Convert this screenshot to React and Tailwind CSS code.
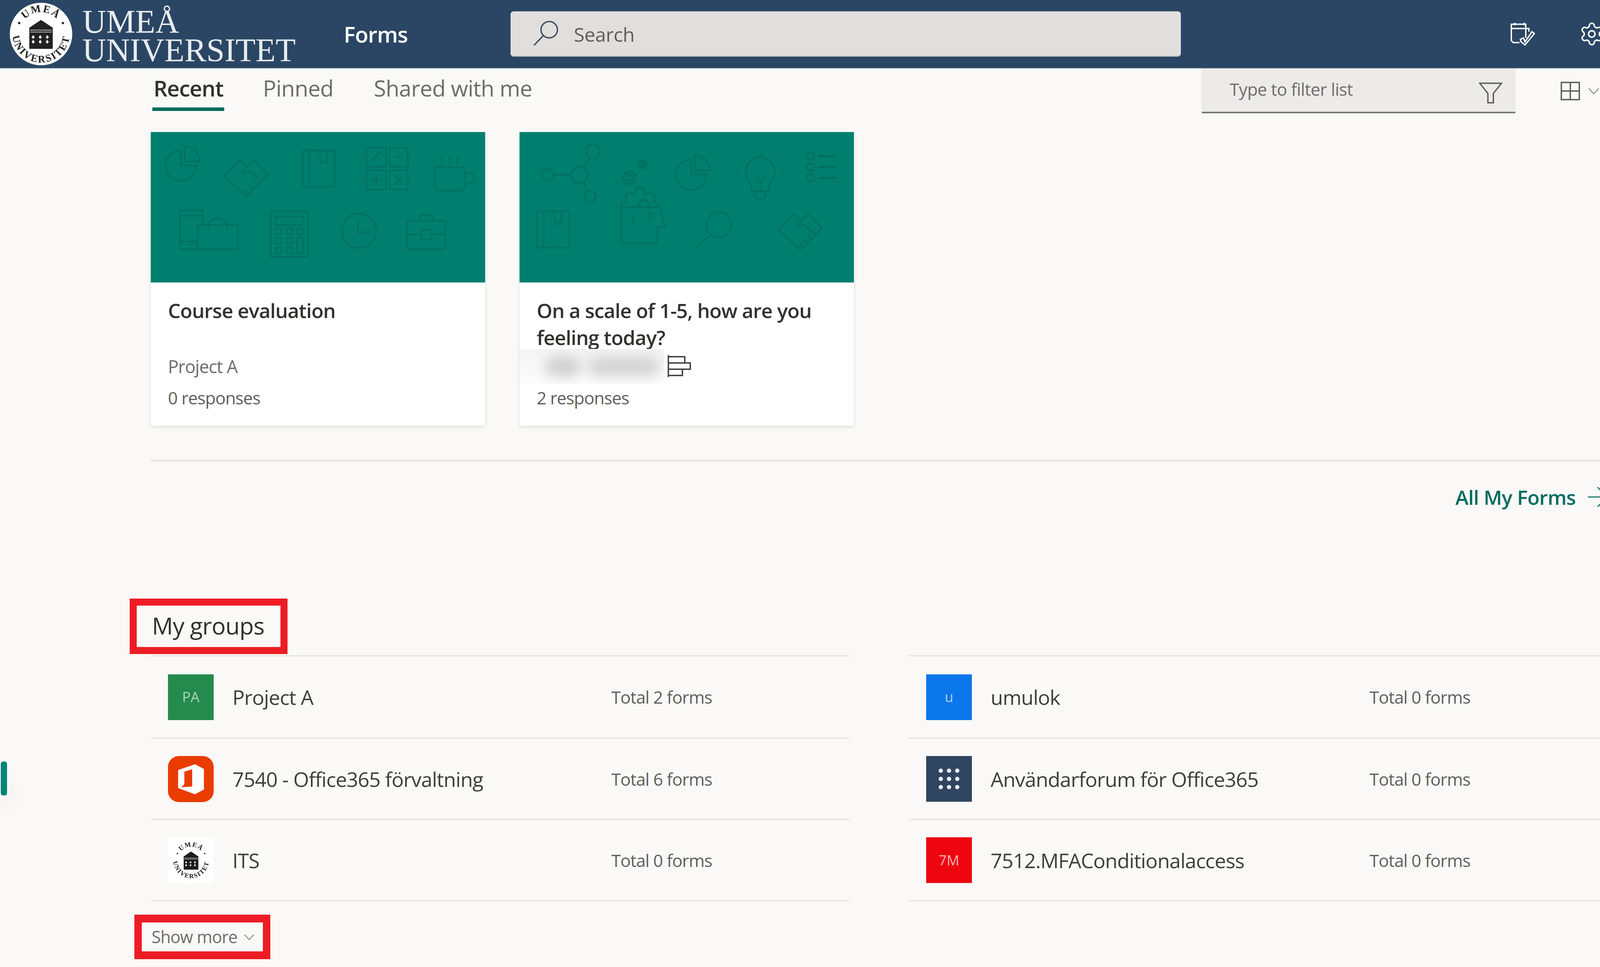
import React from "react";
import { Settings } from "lucide-react";

function Seal({ id, className, fg = "#1c1c1c", bg = "#ffffff" }) {
  return (
    <svg viewBox="0 0 160 160" className={className}>
      <circle cx="80" cy="80" r="80" fill={bg} />
      <defs>
        <path id={id + "top"} d="M 24 80 A 56 56 0 0 1 136 80" />
        <path id={id + "bot"} d="M 7 80 A 73 73 0 0 0 153 80" />
      </defs>
      <text fontFamily="'Liberation Serif',serif" fontWeight="700" fontSize="27" fill={fg} letterSpacing="3">
        <textPath href={"#" + id + "top"} startOffset="50%" textAnchor="middle">UMEÅ</textPath>
      </text>
      <text fontFamily="'Liberation Serif',serif" fontWeight="700" fontSize="26" fill={fg} letterSpacing="3.5">
        <textPath href={"#" + id + "bot"} startOffset="50%" textAnchor="middle">UNIVERSITET</textPath>
      </text>
      <circle cx="24" cy="52" r="3" fill={fg} />
      <circle cx="136" cy="52" r="3" fill={fg} />
      <path d="M80 44 L110 64 V118 H50 V64 Z" fill={fg} />
      <path d="M52 70 H108 M52 75 H108" stroke={bg} strokeWidth="2" opacity="0.7" />
      <path d="M56 88 l4 -5 l4 5 l-4 5 Z M74 88 l4 -5 l4 5 l-4 5 Z M92 88 l4 -5 l4 5 l-4 5 Z M56 100 l4 -5 l4 5 l-4 5 Z M74 100 l4 -5 l4 5 l-4 5 Z M92 100 l4 -5 l4 5 l-4 5 Z" fill={bg} />
    </svg>
  );
}

function Pie({ x, y }) {
  return (
    <g transform={`translate(${x} ${y})`}>
      <path d="M0 0 A39 39 0 1 0 39 38 H0 Z" />
      <path d="M10 -10 A39 39 0 0 1 49 28 H10 Z" />
    </g>
  );
}
function Shake({ x, y }) {
  return (
    <g transform={`translate(${x} ${y})`}>
      <path d="M40 0 L0 40 L55 92 L96 53 L112 36 L76 0 L47 29 Q43 35 50 35 L63 27 L96 53" />
      <path d="M40 0 L58 19 M62 84 L54 76 M73 74 L65 66 M84 63 L76 55" />
    </g>
  );
}
function Book({ x, y }) {
  return (
    <g transform={`translate(${x} ${y})`}>
      <rect width="83" height="93" rx="5" />
      <path d="M17 0 V93 M45 0 V33 L53 27 L62 33 V0" />
    </g>
  );
}

function PatternA() {
  return (
    <svg viewBox="0 0 856 385" className="w-full h-full blur-[1px]" fill="none" stroke="#006c5d" strokeWidth="2.8">
      <Pie x={77} y={47} />
      <Shake x={188} y={72} />
      <Book x={389} y={47} />
      <rect x="552" y="40" width="50" height="49" />
      <rect x="611" y="40" width="47" height="49" />
      <rect x="552" y="98" width="50" height="49" />
      <rect x="611" y="98" width="47" height="49" />
      <path d="M564 74 L590 50 M566 52 h2 M586 72 h2 M625 64 H644 M577 108 V138 M563 123 H591 M624 112 L645 134 M645 112 L624 134" />
      <path d="M727 90 H804 V138 Q804 150 792 150 H739 Q727 150 727 138 Z M804 104 Q828 104 828 118 Q828 132 804 132 M745 64 V87 M765 64 V87 M785 64 V87" />
      <rect x="75" y="200" width="58" height="99" rx="4" />
      <path d="M75 214 H133 M75 280 H120" />
      <circle cx="103" cy="289" r="1.5" />
      <rect x="120" y="237" width="103" height="62" fill="#007f6e" />
      <path d="M148 250 V237 Q150 222 171 222 Q193 222 195 237 V250" />
      <rect x="307" y="203" width="95" height="116" />
      <rect x="320" y="216" width="69" height="22" />
      <rect x="320" y="247" width="14" height="15" />
      <rect x="347" y="247" width="15" height="15" />
      <rect x="374" y="247" width="15" height="15" />
      <rect x="320" y="271" width="14" height="15" />
      <rect x="347" y="271" width="15" height="15" />
      <rect x="374" y="271" width="15" height="39" />
      <rect x="320" y="295" width="14" height="15" />
      <rect x="347" y="295" width="15" height="15" />
      <circle cx="533" cy="253" r="44" />
      <path d="M531 228 V257 H561" />
      <rect x="656" y="227" width="98" height="72" rx="4" />
      <rect x="690" y="213" width="32" height="14" />
      <path d="M656 262 H693 M719 262 H754" />
      <rect x="693" y="250" width="26" height="25" rx="3" />
    </svg>
  );
}

function PatternB() {
  return (
    <svg viewBox="0 0 856 385" className="w-full h-full blur-[1px]" fill="none" stroke="#006c5d" strokeWidth="2.8">
      <circle cx="153" cy="110" r="21" />
      <circle cx="188" cy="49" r="18" />
      <circle cx="71" cy="110" r="15" />
      <circle cx="181" cy="165" r="14.5" />
      <path d="M86 110 H132 M164 92 L180 65 M165 128 L175 151" />
      <circle cx="315" cy="82" r="10" strokeWidth="6" strokeDasharray="5 3" />
      <circle cx="315" cy="82" r="4" />
      <circle cx="281" cy="117" r="16" strokeWidth="7" strokeDasharray="6 4" />
      <circle cx="281" cy="117" r="8" />
      <Pie x={439} y={70} />
      <path d="M594 153 Q596 135 586 125 A37 37 0 1 1 646 125 Q636 135 638 153 Z" transform="translate(0 -2)" />
      <path d="M603 152 H630 V163 Q626 174 617 174 Q607 174 603 163 Z M607 115 L617 129 L629 115 M617 129 V152 M617 54 V62 M574 68 L578 74 M660 68 L656 74 M556 105 H563 M669 105 H677" />
      <circle cx="745" cy="62" r="9.5" />
      <circle cx="745" cy="90" r="9.5" />
      <circle cx="745" cy="117" r="9.5" />
      <path d="M764 62 H812 M764 90 H812 M764 117 H812" strokeWidth="4" />
      <Book x={45} y={203} />
      <path d="M260 192 V285 H353 V244 H373 L359 192 Z" />
      <path d="M260 192 V182 L272 178 L273 158 L284 155 L294 160 L300 143 L316 143 L322 160 L334 155 L345 158 L345 178 L356 184 V192 M304 192 A15 25 0 0 1 333 192" />
      <circle cx="336" cy="215" r="7" />
      <path d="M296 214 Q282 226 296 239" />
      <circle cx="510" cy="237" r="32" />
      <path d="M488 264 L456 292" />
      <Shake x={663} y={209} />
    </svg>
  );
}

function Card({ pattern, title, meta, responses }) {
  return (
    <div className="w-[856px] h-[752px] bg-white rounded-b-[6px] shadow-[0_3px_8px_rgba(0,0,0,0.12)] flex flex-col">
      <div className="h-[385px] bg-[#007f6e] shrink-0">{pattern}</div>
      <div className="pt-[37px] px-[44px] h-[170px] text-[51px] leading-[69px] font-semibold text-[#323130] tracking-[-1px]">{title}</div>
      {meta}
      <div className="mt-[5px] pl-[44px] h-[60px] flex items-center text-[44px] text-[#605e5c] tracking-[-1px]">{responses}</div>
    </div>
  );
}

function Row({ icon, name, total, first }) {
  return (
    <div className={`flex items-center border-t-[3px] border-[#e6e4e2] pl-[44px] ${first ? "h-[211px]" : "h-[208px]"}`}>
      {icon}
      <div className="ml-[48px] w-[970px] text-[52px] text-[#3f3e3d] tracking-[-1px] whitespace-nowrap">{name}</div>
      <div className="text-[44px] text-[#605e5c] tracking-[-1px] whitespace-nowrap">{total}</div>
    </div>
  );
}

function Initials({ bg, fg, children }) {
  return (
    <div className={`w-[117px] h-[117px] shrink-0 flex items-center justify-center text-[36px] ${bg} ${fg}`}>{children}</div>
  );
}

const OfficeIcon = (
  <div className="w-[117px] h-[118px] shrink-0 rounded-[28px] bg-[#eb3c00] overflow-hidden">
    <svg viewBox="0 0 117 118" className="w-full h-full">
      <path fill="#ffffff" fillRule="evenodd" d="M26 36 L69 21 L92 33 V86 L69 98 L26 82 Z M42 40 L62 34 V78 L34 80 L42 72 Z" />
    </svg>
  </div>
);

const ItsIcon = (
  <div className="w-[117px] h-[117px] shrink-0 bg-white flex items-center justify-center">
    <Seal id="its" className="w-[100px] h-[100px]" />
  </div>
);

const DotsIcon = (
  <div className="w-[117px] h-[117px] shrink-0 bg-[#2f4560] flex items-center justify-center">
    <div className="grid grid-cols-3 gap-[10px]">
      {[1, 2, 3, 4, 5, 6, 7, 8, 9].map((i) => (
        <div key={i} className="w-[11px] h-[11px] rounded-full bg-[#e8edf2]" />
      ))}
    </div>
  </div>
);

export default function App() {
  return (
    <div className="relative w-[4165px] h-[2475px] overflow-hidden bg-[#faf9f8] font-['Open_Sans',sans-serif]">
      <header className="h-[175px] bg-[#2a4664] flex items-center pl-[25px] border-b-[2px] border-[#4a6280]">
        <Seal id="hdr" className="w-[160px] h-[162px] shrink-0" fg="#222222" />
        <div className="ml-[26px] w-[547px] shrink-0 font-['Liberation_Serif',serif] text-[84px] leading-[73px] text-[#e8ecf0] pt-[10px] whitespace-nowrap">
          <div>UMEÅ</div>
          <div>UNIVERSITET</div>
        </div>
        <div className="ml-[122px] w-[164px] shrink-0 text-[56px] font-semibold text-white tracking-[-1px]">Forms</div>
        <div className="ml-[263px] w-[1716px] h-[116px] shrink-0 rounded-[8px] bg-[#e1dfdd] border-b-[3px] border-[#c8c6c4] flex items-center pl-[58px]">
          <svg viewBox="0 0 66 66" className="w-[66px] h-[66px] shrink-0" fill="none" stroke="#3f4f60" strokeWidth="3.5">
            <circle cx="41" cy="24" r="21" />
            <path d="M26 39 L2 64" />
          </svg>
          <div className="ml-[38px] pt-[6px] text-[50px] text-[#605e5c] tracking-[-0.5px]">Search</div>
        </div>
        <svg viewBox="0 0 64 60" className="ml-[843px] w-[64px] h-[60px] shrink-0" fill="none" stroke="#ffffff" strokeWidth="3.5">
          <path d="M40 40 V5 H3 V47 L8 52 H24 M3 16 H48 V24 M12 1 V8 M36 1 V8" />
          <path d="M26 44 L34 40 L38 50 L56 24 L62 29 L38 58 L28 50 Z" />
        </svg>
        <Settings className="ml-[112px] w-[66px] h-[66px] text-white shrink-0" strokeWidth={1.4} />
      </header>

      <main className="pl-[386px] pr-[49px]">
        <div className="h-[115px] flex justify-between items-start">
          <div className="flex pl-[7px] text-[57px] leading-[100px] text-[#6e6c6a] tracking-[-0.8px]">
            <div className="w-[184px] h-[109px] -ml-[3px] pl-[3px] border-b-[9px] border-[#036c5f] font-semibold text-[#323130] text-[56px] tracking-[-1.2px] whitespace-nowrap">Recent</div>
            <div className="ml-[99px] w-[184px]">Pinned</div>
            <div className="ml-[100px] whitespace-nowrap">Shared with me</div>
          </div>
          <div className="flex items-center pr-[22px]">
            <div className="w-[804px] h-[115px] bg-[#edebe9] border-b-[4px] border-[#7a7876] rounded-b-[3px] flex items-center pl-[72px] pr-[34px] justify-between">
              <span className="pb-[6px] text-[44px] text-[#6e6c6a] tracking-[-0.7px]">Type to filter list</span>
              <svg viewBox="0 0 60 54" className="w-[60px] h-[54px] mt-[14px]" fill="none" stroke="#5e5c5a" strokeWidth="3.5">
                <path d="M2 2 H58 L37 28 V52 H23 V28 Z" />
              </svg>
            </div>
            <svg viewBox="0 0 50 48" className="ml-[115px] w-[50px] h-[48px] shrink-0" fill="none" stroke="#5e5c5a" strokeWidth="3.5">
              <path d="M2 2 H48 V46 H2 Z M25 2 V46 M2 24 H48" />
            </svg>
            <svg viewBox="0 0 28 16" className="ml-[21px] w-[28px] h-[16px] shrink-0" fill="none" stroke="#8a8886" strokeWidth="2.5">
              <path d="M1 1 L14 15 L27 1" />
            </svg>
          </div>
        </div>

        <div className="mt-[48px] flex gap-[88px]">
          <Card
            pattern={<PatternA />}
            title="Course evaluation"
            meta={
              <div className="h-[90px] pl-[44px] flex items-center text-[45px] text-[#6e6c6a] tracking-[-1px]">Project A</div>
            }
            responses="0 responses"
          />
          <Card
            pattern={<PatternB />}
            title="On a scale of 1-5, how are you feeling today?"
            meta={
              <div className="h-[90px] flex items-center">
                <div className="w-[370px] h-[90px] bg-linear-to-b from-[#f4f4f4] to-[#fcfcfc] overflow-hidden flex items-center pl-[66px] gap-[18px]">
                  <div className="w-[90px] h-[50px] rounded-full bg-[#cecece] blur-[16px]" />
                  <div className="w-[185px] h-[48px] rounded-full bg-[#d2d2d2] blur-[16px]" />
                </div>
                <svg viewBox="0 0 60 56" className="ml-[9px] w-[60px] h-[56px] mt-[-2px]" fill="none" stroke="#3c3c3c" strokeWidth="3.5">
                  <path d="M2 0 V56 M2 4 H44 V20 H2 M2 20 H58 V36 H2 M2 36 H38 V52 H2" />
                </svg>
              </div>
            }
            responses="2 responses"
          />
        </div>

        <div className="mt-[86px] h-[6px] bg-[#ebe9e7]" />
        <div className="mt-[55px] h-[70px] flex items-center justify-end text-[#036c5f]">
          <span className="text-[51px] font-semibold tracking-[-0.7px]">All My Forms</span>
          <svg viewBox="0 0 52 52" className="ml-[30px] w-[52px] h-[52px]" fill="none" stroke="#1b7b6d" strokeWidth="3">
            <path d="M1 26 H50 M26 1 L50 26 L26 51" />
          </svg>
        </div>

        <div className="mt-[225px] -ml-[54px] w-[404px] h-[142px] border-[18px] border-[#ed1c24] flex items-center pl-[39px] pb-[5px] text-[60px] font-medium text-[#323130] tracking-[-0.8px] whitespace-nowrap">
          My groups
        </div>

        <div className="mt-[3px] flex gap-[152px]">
          <div className="w-[1789px] border-b-[3px] border-[#e6e4e2]">
            <Row first icon={<Initials bg="bg-[#248a4d]" fg="text-[#a9d7bd]">PA</Initials>} name="Project A" total="Total 2 forms" />
            <Row icon={OfficeIcon} name="7540 - Office365 förvaltning" total="Total 6 forms" />
            <Row icon={ItsIcon} name="ITS" total="Total 0 forms" />
          </div>
          <div className="w-[1789px] border-b-[3px] border-[#e6e4e2]">
            <Row first icon={<Initials bg="bg-[#0b76ea]" fg="text-[#a7d0f7]">u</Initials>} name="umulok" total="Total 0 forms" />
            <Row icon={DotsIcon} name="Användarforum för Office365" total="Total 0 forms" />
            <Row icon={<Initials bg="bg-[#ed0510]" fg="text-[#f9b5b5]">7M</Initials>} name="7512.MFAConditionalaccess" total="Total 0 forms" />
          </div>
        </div>

        <div className="mt-[34px] -ml-[42px] w-[348px] h-[114px] border-x-[19px] border-y-[20px] border-[#ed1c24] flex items-center pl-[25px] text-[43px] text-[#6e6c6a] tracking-[-0.9px] whitespace-nowrap">
          Show more
          <svg viewBox="0 0 28 16" className="ml-[17px] w-[26px] h-[15px] shrink-0" fill="none" stroke="#8a8886" strokeWidth="2.5">
            <path d="M1 1 L14 15 L27 1" />
          </svg>
        </div>
      </main>

      <div className="absolute left-[2px] top-[1949px] w-[16px] h-[87px] rounded-[6px] bg-[#038575] shadow-[4px_40px_40px_rgba(0,0,0,0.06)]" />
    </div>
  );
}
